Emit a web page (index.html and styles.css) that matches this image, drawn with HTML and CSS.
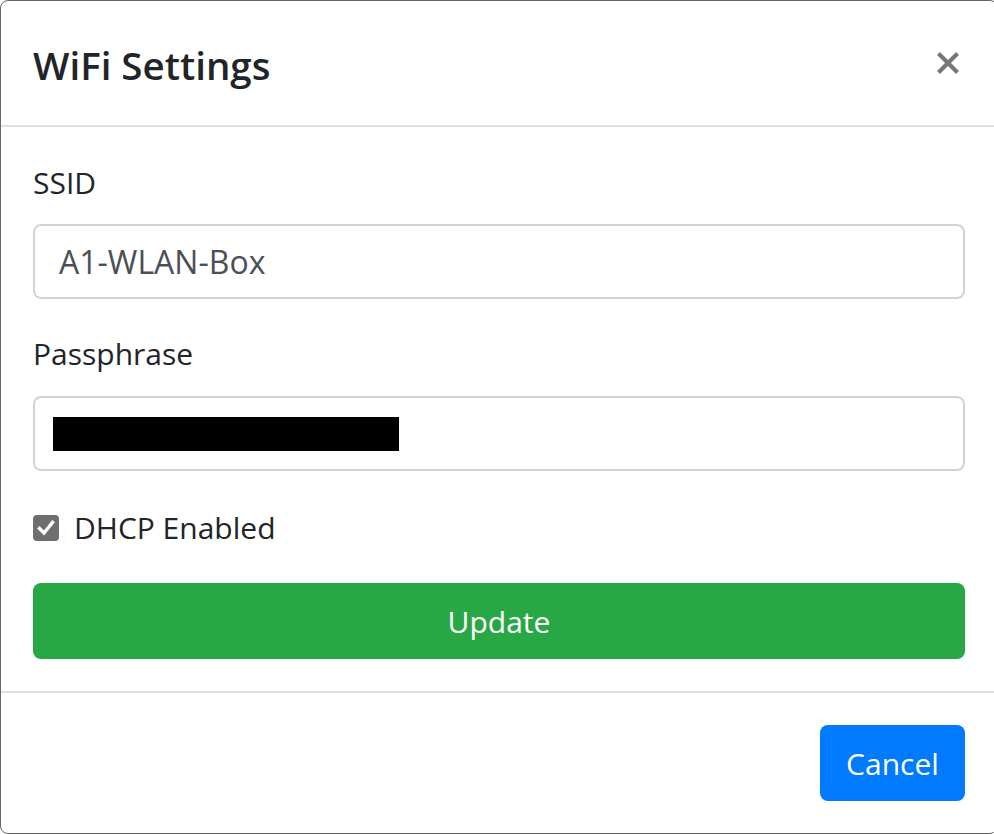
FILE: index.html
```html
<!DOCTYPE html>
<html lang="en">
<head>
<meta charset="utf-8">
<title>WiFi Settings</title>
<link rel="stylesheet" href="styles.css">
</head>
<body>
<div class="modal">
  <div class="modal-header">
    <h5 class="modal-title">WiFi Settings</h5>
    <button class="close" type="button" aria-label="Close">
      <svg width="24" height="24" viewBox="0 0 24 24"><path d="M2.5 2.5 L21.5 21.5 M21.5 2.5 L2.5 21.5" stroke="#777" stroke-width="4.2" stroke-linecap="butt"/></svg>
    </button>
  </div>
  <div class="modal-body">
    <label class="label label-ssid">SSID</label>
    <div class="input">A1-WLAN-Box</div>
    <label class="label label-pass">Passphrase</label>
    <div class="input input-pass"><span class="redact"></span></div>
    <div class="check-row">
      <span class="checkbox"><svg width="20" height="20" viewBox="0 0 20 20"><path d="M3.5 10.5 L8 15 L16.5 4.5" fill="none" stroke="#fff" stroke-width="3.4" stroke-linecap="square"/></svg></span>
      <span class="check-label">DHCP Enabled</span>
    </div>
    <button class="btn btn-update" type="button">Update</button>
  </div>
  <div class="modal-footer">
    <button class="btn btn-cancel" type="button">Cancel</button>
  </div>
</div>
</body>
</html>
```
FILE: styles.css
```css
html, body {
  margin: 0;
  padding: 0;
  background: #fff;
  overflow: hidden;
}
body {
  font-family: "Segoe UI", "Open Sans", "Noto Sans", sans-serif;
  color: #212529;
  width: 994px;
  height: 834px;
}
.modal {
  box-sizing: border-box;
  width: 998px;
  height: 834px;
  border: 1px solid #666;
  border-radius: 8px;
  display: flex;
  flex-direction: column;
  background: #fff;
}
.modal-header {
  height: 124px;
  padding: 0 37px 0 32px;
  border-bottom: 2px solid #dee2e6;
  display: flex;
  align-items: center;
  justify-content: space-between;
}
.modal-title {
  margin: 4px 0 0 0;
  font-size: 38.5px;
  font-weight: 600;
  line-height: 60px;
  color: #212529;
}
.close {
  border: 0;
  background: none;
  padding: 0;
  width: 24px;
  height: 24px;
  display: flex;
}
.modal-body {
  padding: 32px 32px;
  display: flex;
  flex-direction: column;
}
.label {
  font-size: 30px;
  line-height: 48px;
  height: 48px;
  display: block;
}
.label-ssid { margin-bottom: 17px; }
.label-pass { margin-top: 31px; margin-bottom: 18px; }
.input {
  box-sizing: border-box;
  height: 75px;
  border: 2px solid #ced4da;
  border-radius: 8px;
  padding: 0 24px;
  font-size: 32px;
  color: #495057;
  display: flex;
  align-items: center;
}
.input-pass { padding-left: 18px; }
.redact {
  display: block;
  width: 346px;
  height: 34px;
  background: #000;
}
.check-row {
  margin-top: 33px;
  height: 48px;
  display: flex;
  align-items: center;
}
.checkbox {
  width: 26px;
  height: 26px;
  border-radius: 4px;
  background: #6f6f6f;
  display: flex;
  align-items: center;
  justify-content: center;
  margin-right: 15px;
}
.check-label {
  font-size: 30px;
  line-height: 48px;
}
.btn {
  box-sizing: border-box;
  border: 0;
  border-radius: 8px;
  font-family: inherit;
  font-size: 30px;
  color: #fff;
  height: 76px;
  padding: 0 24px;
}
.btn-update {
  margin-top: 31px;
  width: 100%;
  background: #28a745;
}
.modal-footer {
  flex: 1;
  border-top: 2px solid #dee2e6;
  padding: 32px 32px;
  display: flex;
  justify-content: flex-end;
  align-items: flex-start;
}
.btn-cancel {
  width: 145px;
  background: #007bff;
}
```
